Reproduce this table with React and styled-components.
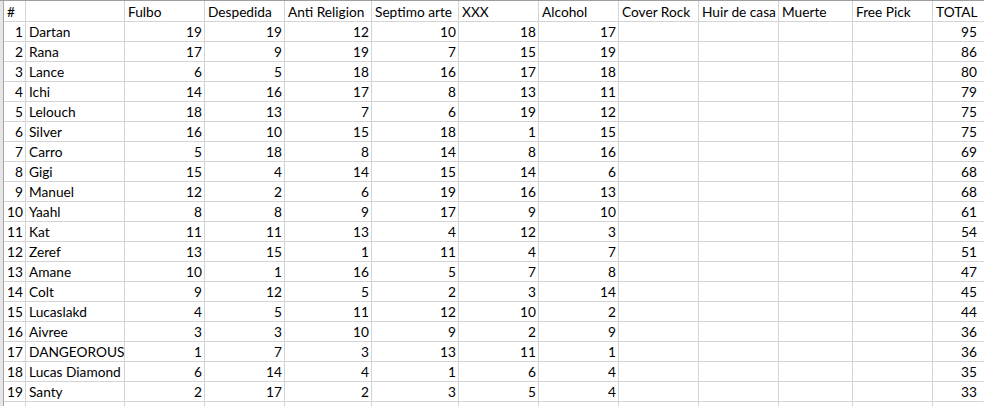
import React from "react";
import styled, { createGlobalStyle } from "styled-components";

const Global = createGlobalStyle`
  html, body { margin: 0; padding: 0; background: #ffffff; }
  body { font-family: Lato, "Open Sans", sans-serif; overflow: hidden; }
`;

const COLS = [22, 99, 80, 80, 87, 87, 80, 80, 80, 80, 74, 80, 47, 80];

const Sheet = styled.div`
  display: flex;
  width: 984px;
  height: 406px;
  overflow: hidden;
  border-top: 1px solid #9f9f9f;
  box-sizing: border-box;
`;

const RowHeaderEdge = styled.div`
  flex: 0 0 3px;
  background: #e6e6e6;
  border-right: 1px solid #a6a6a6;
`;

const Grid = styled.div`
  display: grid;
  grid-template-columns: ${COLS.map((c) => c + "px").join(" ")};
  grid-template-rows: 21px;
  grid-auto-rows: 20px;
  align-content: start;
`;

const Cell = styled.div`
  box-sizing: border-box;
  height: ${(p) => (p.$head ? 21 : 20)}px;
  border-right: 1px solid ${(p) => (p.$open ? "transparent" : "#d4d4d4")};
  border-bottom: 1px solid #d4d4d4;
  display: flex;
  align-items: flex-end;
  justify-content: ${(p) => (p.$num ? "flex-end" : "flex-start")};
  padding: 0 ${(p) => (p.$num ? "2px" : "0")} 1px ${(p) => (p.$num ? "0" : "3px")};
  font-family: Lato, "Open Sans", sans-serif;
  font-size: 13.7px;
  line-height: 17px;
  color: #000;
  white-space: nowrap;
  overflow: visible;
`;

const headers = [
  "#", "", "Fulbo", "Despedida", "Anti Religion", "Septimo arte", "XXX",
  "Alcohol", "Cover Rock", "Huir de casa", "Muerte", "Free Pick", "TOTAL", "",
];

const rows = [
  ["Dartan", 19, 19, 12, 10, 18, 17, 95],
  ["Rana", 17, 9, 19, 7, 15, 19, 86],
  ["Lance", 6, 5, 18, 16, 17, 18, 80],
  ["Ichi", 14, 16, 17, 8, 13, 11, 79],
  ["Lelouch", 18, 13, 7, 6, 19, 12, 75],
  ["Silver", 16, 10, 15, 18, 1, 15, 75],
  ["Carro", 5, 18, 8, 14, 8, 16, 69],
  ["Gigi", 15, 4, 14, 15, 14, 6, 68],
  ["Manuel", 12, 2, 6, 19, 16, 13, 68],
  ["Yaahl", 8, 8, 9, 17, 9, 10, 61],
  ["Kat", 11, 11, 13, 4, 12, 3, 54],
  ["Zeref", 13, 15, 1, 11, 4, 7, 51],
  ["Amane", 10, 1, 16, 5, 7, 8, 47],
  ["Colt", 9, 12, 5, 2, 3, 14, 45],
  ["Lucaslakd", 4, 5, 11, 12, 10, 2, 44],
  ["Aivree", 3, 3, 10, 9, 2, 9, 36],
  ["DANGEOROUS", 1, 7, 3, 13, 11, 1, 36],
  ["Lucas Diamond", 6, 14, 4, 1, 6, 4, 35],
  ["Santy", 2, 17, 2, 3, 5, 4, 33],
];

export default function App() {
  return (
    <>
      <Global />
      <Sheet>
        <RowHeaderEdge />
        <Grid>
          {headers.map((h, i) => (
            <Cell key={"h" + i} $head $open={i === 12}>
              {h}
            </Cell>
          ))}
          {rows.map((r, ri) => {
            const [name, ...nums] = r;
            const total = nums[6];
            const vals = nums.slice(0, 6);
            return (
              <React.Fragment key={ri}>
                <Cell $num>{ri + 1}</Cell>
                <Cell>{name}</Cell>
                {vals.map((v, vi) => (
                  <Cell key={vi} $num>
                    {v}
                  </Cell>
                ))}
                <Cell />
                <Cell />
                <Cell />
                <Cell />
                <Cell $num $open>
                  {total}
                </Cell>
                <Cell />
              </React.Fragment>
            );
          })}
          {COLS.map((_, i) => (
            <Cell key={"e" + i} $open={i === 12} />
          ))}
        </Grid>
      </Sheet>
    </>
  );
}
